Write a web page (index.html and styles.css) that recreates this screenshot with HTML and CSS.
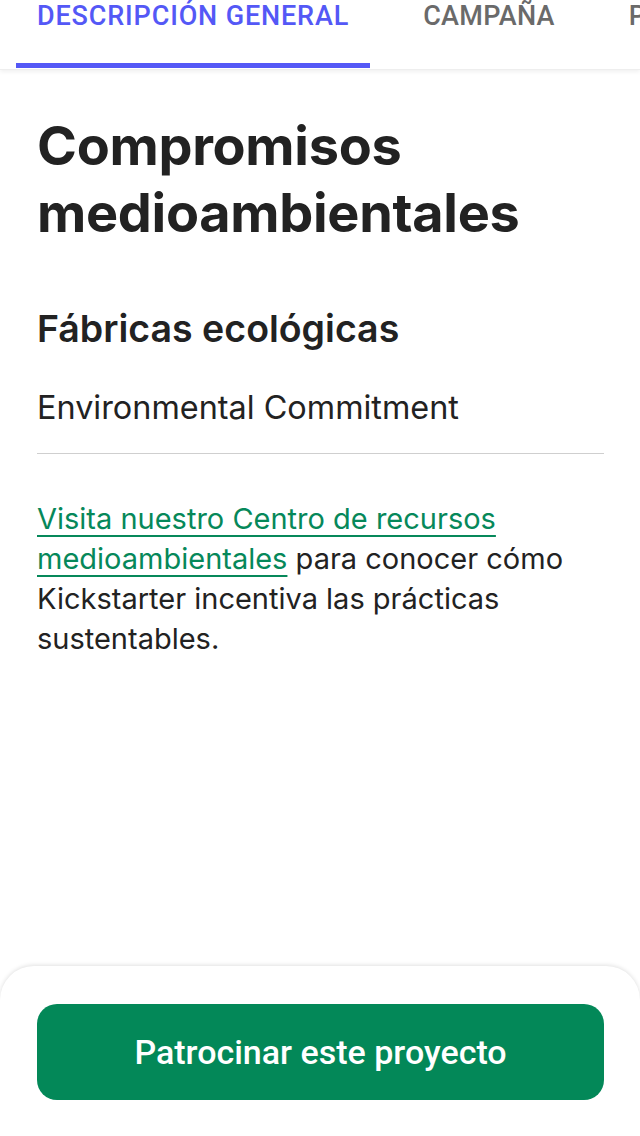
FILE: index.html
```html
<!DOCTYPE html>
<html lang="es">
<head>
<meta charset="utf-8">
<title>Compromisos medioambientales</title>
<link rel="stylesheet" href="styles.css">
</head>
<body>
<div class="page">
  <nav class="tabs">
    <div class="tab active">DESCRIPCIÓN GENERAL</div>
    <div class="tab">CAMPAÑA</div>
    <div class="tab">PREGUNTAS FRECUENTES</div>
  </nav>
  <main class="content">
    <h1 class="title">Compromisos medioambientales</h1>
    <h2 class="subtitle">Fábricas ecológicas</h2>
    <p class="commit">Environmental Commitment</p>
    <hr class="rule">
    <p class="body"><a class="link" href="#">Visita nuestro Centro de recursos medioambientales</a> para conocer cómo Kickstarter incentiva las prácticas sustentables.</p>
  </main>
  <footer class="bottom">
    <button class="cta">Patrocinar este proyecto</button>
  </footer>
</div>
</body>
</html>
```
FILE: styles.css
```css
* { box-sizing: border-box; }
html, body { margin: 0; padding: 0; background: #fff; }
body { font-family: Inter, "Noto Sans", sans-serif; color: #222; }
.page { width: 640px; height: 1136px; display: flex; flex-direction: column; overflow: hidden; }
.tabs {
  display: flex; height: 70px; padding: 0 0 0 16px;
  white-space: nowrap; overflow: hidden;
  box-shadow: 0 2px 4px rgba(0,0,0,0.06);
  border-bottom: 1px solid #eee;
  flex-shrink: 0;
}
.tab {
  font-family: Roboto, sans-serif; font-weight: 500; font-size: 27px; letter-spacing: 0.3px;
  color: #6a6a6a; padding: 2px 21px 0; height: 68px; line-height: 28px;
  margin-right: 32px; flex-shrink: 0;
}
.tab.active { color: #5458f6; border-bottom: 5px solid #5458f6; letter-spacing: 0.85px; }
.content { flex: 1; padding: 42px 36px 0 37px; }
.title { font-size: 54px; font-weight: 700; line-height: 67px; margin: 0; letter-spacing: -0.3px; color: #222; }
.subtitle { font-size: 37.5px; font-weight: 600; margin: 59px 0 0; line-height: 48px; color: #222; }
.commit { font-size: 32.4px; font-weight: 400; margin: 35px 0 0; line-height: 40px; color: #222; }
.rule { border: 0; border-top: 1px solid #cfcfcf; margin: 25px 0 0; }
.body { font-size: 29px; line-height: 40px; margin: 45px 0 0; color: #222; }
.link { color: #06885a; text-decoration: underline; text-underline-offset: 6px; text-decoration-thickness: 2px; }
.bottom {
  flex-shrink: 0; height: 170px; padding: 38px 36px 0 37px;
  border-radius: 34px 34px 0 0; box-shadow: 0 -1px 4px rgba(0,0,0,0.12); background: #fff;
}
.cta {
  width: 100%; height: 96px; border: 0; border-radius: 20px; background: #038858; color: #fff;
  font-family: Roboto, sans-serif; font-size: 34px; font-weight: 500; padding: 0;
}
```
